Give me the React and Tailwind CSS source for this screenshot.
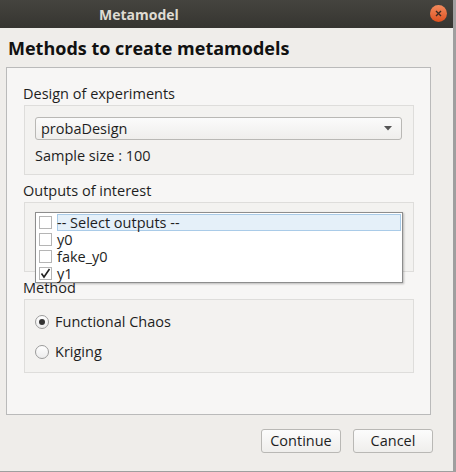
import React from "react";

const font = { fontFamily: '"Open Sans", "DejaVu Sans", sans-serif' };

function Check({ checked }) {
  return (
    <span className="w-[13px] h-[13px] border border-[#b5b5b5] bg-white flex items-center justify-center shrink-0">
      {checked && (
        <svg width="11" height="11" viewBox="0 0 11 11">
          <path d="M1.5 5.5 L4 9 L9.5 1" fill="none" stroke="#222" strokeWidth="1.6" />
        </svg>
      )}
    </span>
  );
}

function Radio({ checked, label }) {
  return (
    <div className="h-[30px] flex items-center pl-[10px]">
      <span className="w-[14px] h-[14px] rounded-full border border-[#9b9b9b] bg-gradient-to-b from-[#ffffff] to-[#ececec] flex items-center justify-center">
        {checked && <span className="w-[6px] h-[6px] rounded-full bg-[#333]" />}
      </span>
      <span className="ml-[6px] text-[14.5px] text-[#1e1e1e]">{label}</span>
    </div>
  );
}

export default function App() {
  const outputs = [
    { name: "-- Select outputs --", checked: false, active: true },
    { name: "y0", checked: false },
    { name: "fake_y0", checked: false },
    { name: "y1", checked: true },
  ];

  return (
    <div className="w-[456px] h-[472px] bg-[#9f9f9f]" style={font}>
      <div className="w-[453px] h-[471px] bg-[#efedea] flex flex-col">
        {/* title bar */}
        <div className="h-[28px] bg-gradient-to-b from-[#45443f] to-[#363531] flex items-center relative">
          <span className="pl-[99px] text-[14px] font-bold text-[#dfdbd2]">Metamodel</span>
          <span className="absolute left-[430px] top-[5px] w-[17px] h-[17px] rounded-full bg-gradient-to-b from-[#f28a5c] to-[#df4f1c] flex items-center justify-center">
            <svg width="7" height="7" viewBox="0 0 7 7">
              <path d="M1 1 L6 6 M6 1 L1 6" stroke="#3a2a22" strokeWidth="1.4" />
            </svg>
          </span>
        </div>

        <div className="pt-[8px] pl-[8px] h-[24px] box-content text-[18px] leading-[24px] font-bold text-[#111]">
          Methods to create metamodels
        </div>

        {/* main panel */}
        <div className="ml-[6px] mt-[7px] w-[425px] h-[348px] border border-[#bababa] bg-[#f7f6f5] pl-[16px] pt-[16px] text-[14.5px] text-[#1e1e1e]">
          <div className="h-[20px] leading-[20px]">Design of experiments</div>
          <div className="mt-[1px] ml-[1px] w-[390px] h-[70px] border border-[#dedddb] bg-[#f3f2f0] pl-[10px] pt-[11px]">
            <div className="w-[367px] h-[23px] border border-[#b9b8b5] rounded-[3px] bg-gradient-to-b from-[#fbfbfb] to-[#efeeec] flex items-center pl-[5px] pr-[9px] justify-between">
              <span>probaDesign</span>
              <svg width="8" height="5" viewBox="0 0 8 5">
                <path d="M0 0 H8 L4 4.5 Z" fill="#555" />
              </svg>
            </div>
            <div className="mt-[6px] h-[20px] leading-[20px]">Sample size : 100</div>
          </div>

          <div className="mt-[6px] h-[20px] leading-[20px]">Outputs of interest</div>
          <div className="mt-[1px] ml-[1px] w-[390px] h-[70px] border border-[#dedddb] bg-[#f3f2f0] relative">
            <div className="absolute left-[10px] top-[9px] w-[368px] h-[71px] border border-[#8d8d8d] bg-white shadow-[1px_1px_2px_rgba(0,0,0,0.25)] z-10 pt-[1px] pl-[3px]">
              {outputs.map((o) => (
                <div key={o.name} className="h-[17px] flex items-center">
                  <Check checked={o.checked} />
                  <span
                    className={
                      o.active
                        ? "ml-[5px] mr-[1px] flex-1 h-[17px] leading-[17px] bg-[#e5f0f9] shadow-[inset_0_0_0_1px_#a9cbe8] text-[14.5px]"
                        : "ml-[5px] flex-1 h-[17px] leading-[17px] text-[14.5px]"
                    }
                  >
                    {o.name}
                  </span>
                </div>
              ))}
            </div>
          </div>

          <div className="mt-[6px] h-[20px] leading-[20px]">Method</div>
          <div className="mt-[1px] ml-[1px] w-[390px] h-[74px] border border-[#dedddb] bg-[#f3f2f0] pt-[7px]">
            <Radio checked label="Functional Chaos" />
            <Radio label="Kriging" />
          </div>
        </div>

        <div className="mt-[14px] flex justify-end gap-[12px] pr-[20px]">
          <button className="w-[80px] h-[24px] border border-[#b9b8b5] rounded-[3px] bg-gradient-to-b from-[#fcfcfc] to-[#efeeec] text-[14.5px] text-[#1e1e1e]">
            Continue
          </button>
          <button className="w-[80px] h-[24px] border border-[#b9b8b5] rounded-[3px] bg-gradient-to-b from-[#fcfcfc] to-[#efeeec] text-[14.5px] text-[#1e1e1e]">
            Cancel
          </button>
        </div>
      </div>
    </div>
  );
}
